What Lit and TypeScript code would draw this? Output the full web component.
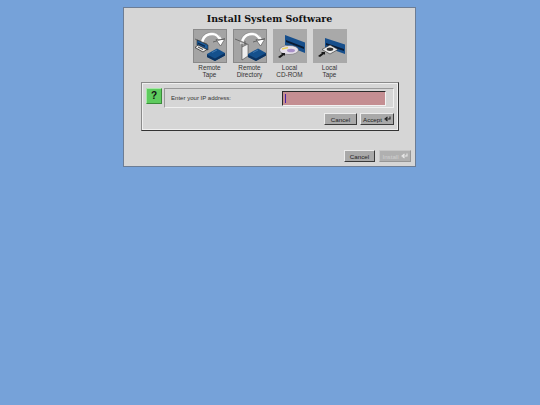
import { LitElement, html, css, svg } from "lit";
import { customElement } from "lit/decorators.js";

const desk = (x: number) => svg`<g transform="translate(${x} 0)"><path d="M0 25 L10 19.500 L18 24 L18 26.500 L8 32 L0 28 Z" fill="#14508c"/><path d="M0 25.500 L8 29.500 L18 24 L18 26.500 L8 32 L0 28 Z" fill="#0b3361"/><path d="M5 23.500 L10 21" stroke="#4b84bd" stroke-width=".8"/></g>`;
const arrow = svg`<path d="M9 15 C8 5 23 0 27.500 11" fill="none" stroke="#fff" stroke-width="3"/><path d="M23 10.500 L31.500 10.500 L27.500 17 Z" fill="#fff" stroke="#333" stroke-width=".5"/><path d="M8 12 C9 3 22 0 27 8" fill="none" stroke="#666" stroke-width=".4"/><path d="M2 10 L14 15 M20 13 L32 9.500" stroke="#3a3a3a" stroke-width=".6"/>`;
const small = (y: number) => svg`<path d="M5 ${y + 4} L9 ${y + 1} L8 ${y} L12 ${y} L12 ${y + 3} L11 ${y + 2} L7 ${y + 5} Z" fill="#1a1a1a"/>`;

const icons = {
  rtape: svg`${arrow}<path d="M4 11 L15 16 L15 21 L4 16 Z" fill="#1d5d9c" stroke="#1a1a1a" stroke-width=".5"/><path d="M5 13.500 L12 16.500 L12 18 L5 15 Z" fill="#0b2a50"/><path d="M5 16 L14 20.500 L10 23 L2 18.500 Z" fill="#e8e8e8" stroke="#222" stroke-width=".7"/><path d="M5 18 L10 20.500" stroke="#333" stroke-width=".9"/>${desk(14)}`,
  rdir: svg`${arrow}<path d="M9 18 L15 15 L15 27 L9 31 Z" fill="#eee" stroke="#444" stroke-width=".6"/><path d="M12 12 L12 16" stroke="#444" stroke-width=".6"/><path d="M9 12 L9 18" stroke="#444" stroke-width=".6"/>${desk(15)}`,
  cd: svg`<path d="M12 6 L32 13.500 L32 24 L12 16 Z" fill="#174f8c"/><path d="M13 11 L31 18 L31 20 L13 13 Z" fill="#081a33"/><ellipse cx="16" cy="21" rx="9.500" ry="4.500" fill="#e6e0ea" stroke="#444" stroke-width=".4"/><ellipse cx="18" cy="21.500" rx="4" ry="1.800" fill="#a890c8"/><path d="M9 20 L15 18.500" stroke="#e8cf60" stroke-width="1.400"/>${small(24)}`,
  tape: svg`<path d="M12 9 L32 15.500 L32 25 L12 18 Z" fill="#174f8c"/><path d="M13 14 L31 20 L31 22 L13 16 Z" fill="#081a33"/><path d="M9 20.500 L17 16 L25 20.500 L17 25 Z" fill="#e8e8e8" stroke="#333" stroke-width=".6"/><ellipse cx="17" cy="20.300" rx="3.300" ry="1.700" fill="#333"/>${small(23)}`,
};

@customElement("app-root")
export class AppRoot extends LitElement {
  static styles = css`
    :host { display: block; width: 540px; height: 405px; background: #76a2d9; overflow: hidden; box-sizing: border-box; padding: 7px 0 0 123px; font-family: "Liberation Sans", Arial, sans-serif; color: #2c2c2c; }
    * { box-sizing: border-box; }
    .dialog { width: 293px; height: 160px; background: #d6d6d6; border: 1px solid; border-color: #f0f0f0 #2a3444 #2a3444 #f0f0f0; outline: 1px solid #6c7d95; outline-offset: -1px; display: flex; flex-direction: column; align-items: stretch; padding: 5px 4px 3px 4px; }
    .title { font-family: "DejaVu Serif", serif; font-weight: 700; font-size: 9.45px; line-height: 12px; color: #111; text-align: center; height: 16px; white-space: nowrap; }
    .icons { display: flex; justify-content: center; gap: 6px; height: 53px; }
    .opt { width: 34px; display: flex; flex-direction: column; align-items: center; }
    .ic { width: 34px; height: 34px; background: #a9a9a9; display: block; flex: none; }
    .ic.sel { outline: 1px solid; outline-color: #8a8a8a; outline-offset: -1px; box-shadow: inset 1px 1px 0 #ececec; background: #a4a4a4; }
    .ic svg { display: block; width: 100%; height: 100%; }
    .lab { font-size: 6.4px; line-height: 7px; text-align: center; white-space: nowrap; margin-top: 1px; color: #333; }
    .panel { margin: 0 12px 0 13px; height: 49px; flex: none; border: 1px solid; border-color: #8a8a8a #333 #333 #8a8a8a; box-shadow: inset 1px 1px 0 #f0f0f0, inset -1px -1px 0 #f0f0f0; padding: 5px 4px 4px 4px; display: flex; flex-direction: column; gap: 5px; }
    .row { display: flex; gap: 2px; height: 20px; }
    .q { width: 16px; height: 16px; background: #5ecb5e; border: 1px solid; border-color: #a8e8a8 #3a8a3a #3a8a3a #a8e8a8; display: flex; align-items: center; justify-content: center; font: 700 10px/1 "Liberation Sans", sans-serif; color: #111; flex: none; }
    .field { flex: 1; border: 1px solid; border-color: #9a9a9a #f0f0f0 #f0f0f0 #9a9a9a; display: flex; align-items: center; justify-content: space-between; padding: 0 7px 0 6px; font-size: 6.05px; color: #333; }
    .input { width: 104px; height: 15px; background: #c48e92; border: 1px solid; border-color: #2a2a2a #f2f2f2 #f2f2f2 #2a2a2a; display: flex; align-items: center; padding-left: 2px; }
    .caret { width: 1px; height: 9px; background: #4a1fa8; }
    .actions { display: flex; justify-content: flex-end; gap: 3px; }
    .btn { height: 12px; width: 33px; flex: none; background: #a9a9a9; border: 1px solid; border-color: #ececec #3a3a3a #3a3a3a #ececec; display: flex; align-items: center; justify-content: center; gap: 2px; font-size: 6.2px; color: #222; padding: 0; }
    .btn.def { width: 34px; }
    .btn svg { width: 7px; height: 6px; flex: none; }
    .btn.off { background: #b0b0b0; color: #d0d0d0; border-color: #c8c8c8 #969696 #969696 #c8c8c8; }
    .foot { margin: auto 0 1px; display: flex; justify-content: flex-end; gap: 4px; }
    .foot .btn { width: 31px; }
    .foot .btn.off { width: 32px; }
  `;

  private opt(k: keyof typeof icons, a: string, b: string, sel: boolean) {
    return html`<div class="opt"><div class="ic ${sel ? "sel" : ""}"><svg viewBox="0 0 34 34">${icons[k]}</svg></div><div class="lab">${a}<br />${b}</div></div>`;
  }

  private enter(color: string) {
    return html`<svg viewBox="0 0 7 6"><path d="M6 0.500 V3 H2 M3.500 1 L1 3 L3.500 5" fill="none" stroke=${color} stroke-width="1.100"/></svg>`;
  }

  render() {
    return html`<div class="dialog">
      <div class="title">Install System Software</div>
      <div class="icons">
        ${this.opt("rtape", "Remote", "Tape", true)}
        ${this.opt("rdir", "Remote", "Directory", true)}
        ${this.opt("cd", "Local", "CD-ROM", false)}
        ${this.opt("tape", "Local", "Tape", false)}
      </div>
      <div class="panel">
        <div class="row">
          <div class="q">?</div>
          <div class="field"><span>Enter your IP address:</span><div class="input"><div class="caret"></div></div></div>
        </div>
        <div class="actions">
          <div class="btn">Cancel</div>
          <div class="btn def">Accept ${this.enter("#222")}</div>
        </div>
      </div>
      <div class="foot">
        <div class="btn">Cancel</div>
        <div class="btn off">Install ${this.enter("#e8e8e8")}</div>
      </div>
    </div>`;
  }
}
